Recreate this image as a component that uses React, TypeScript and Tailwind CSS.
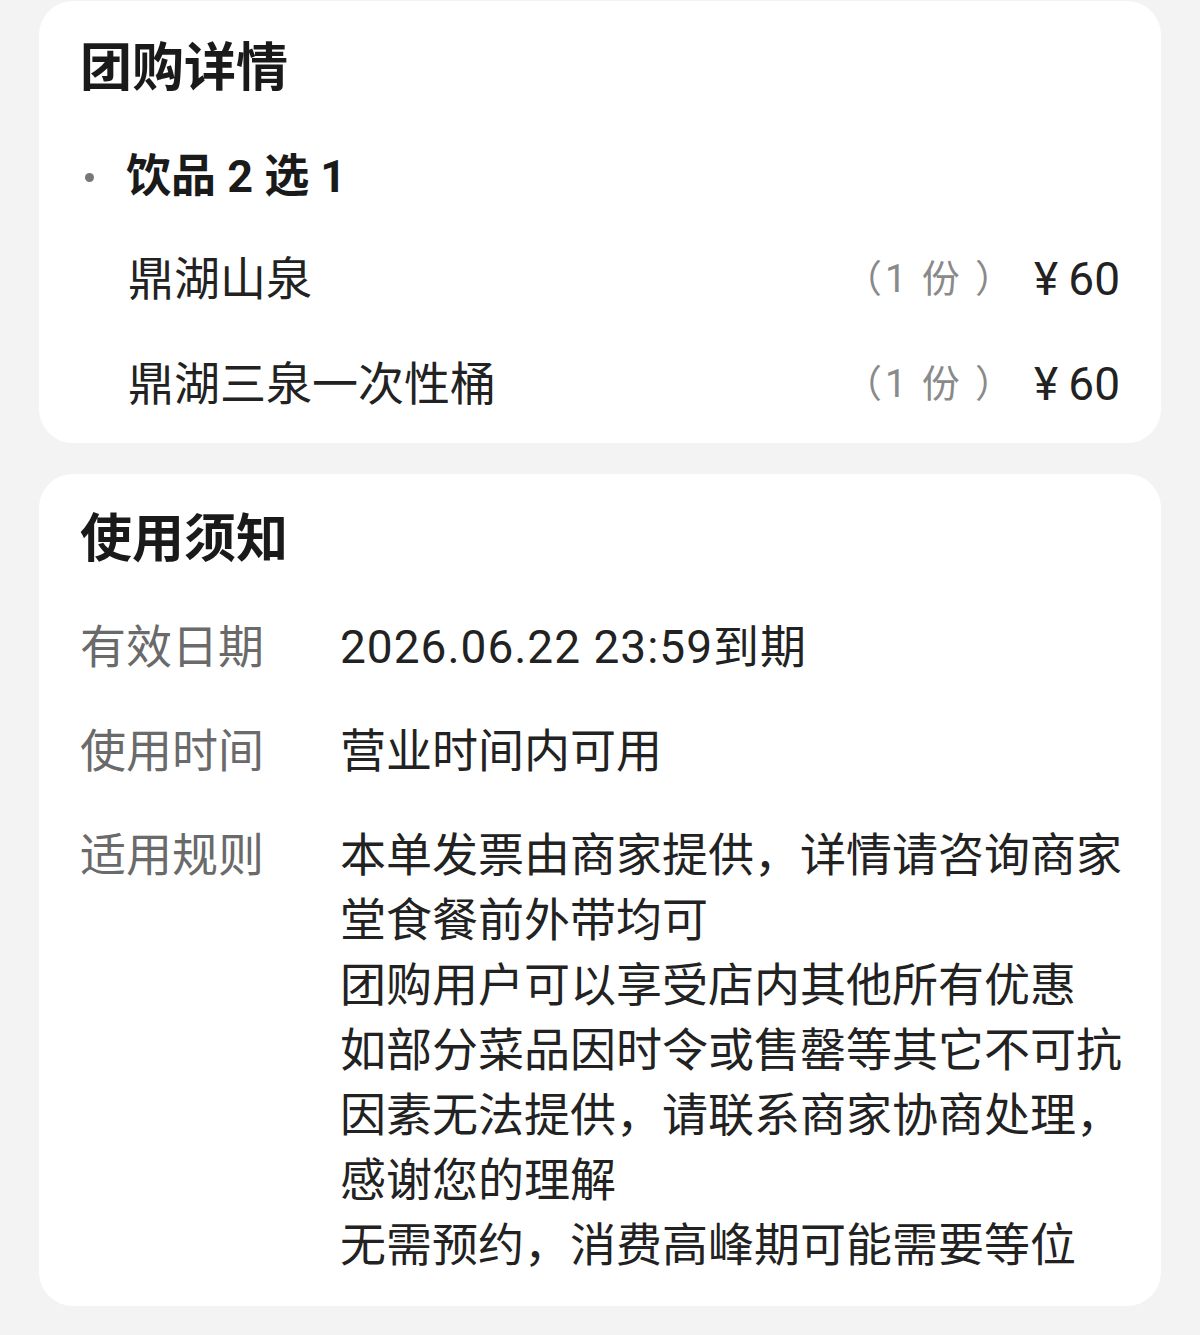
import React from 'react';

const font = "font-['Roboto','Noto_Sans_CJK_SC',sans-serif]";

const items = [
  { name: '鼎湖山泉', qty: 1, price: 60 },
  { name: '鼎湖三泉一次性桶', qty: 1, price: 60 },
];

const rules = [
  '本单发票由商家提供，详情请咨询商家',
  '堂食餐前外带均可',
  '团购用户可以享受店内其他所有优惠',
  '如部分菜品因时令或售罄等其它不可抗',
  '因素无法提供，请联系商家协商处理，',
  '感谢您的理解',
  '无需预约，消费高峰期可能需要等位',
];

function Row({ label, lines, wide }: { label: string; lines: string[]; wide?: boolean }) {
  return (
    <div className="flex">
      <div className="w-[260px] shrink-0 text-[46px] leading-[65px] text-[#6a6a6a]">{label}</div>
      <div className={`flex flex-col text-[46px] leading-[65px] text-[#222] ${wide ? 'tracking-[1px]' : ''}`}>
        {lines.map((l) => (
          <div key={l} className="whitespace-nowrap">{l}</div>
        ))}
      </div>
    </div>
  );
}

export default function App() {
  return (
    <div className={`${font} h-[1335px] overflow-hidden bg-[#f3f3f3] px-[39px] pt-px`}>
      <div className="rounded-[34px] bg-white px-[41px] pt-[37px] pb-[6px]">
        <h2 className="h-[62px] text-[52px] font-bold leading-[62px] text-[#1a1a1a]">团购详情</h2>
        <div className="mt-[47px] flex h-[60px] items-center">
          <span className="ml-[5px] h-[9px] w-[9px] rounded-full bg-[#777]" />
          <span className="ml-[32px] text-[45px] font-bold leading-[60px] text-[#1a1a1a]">饮品 2 选 1</span>
        </div>
        <div className="mt-[20px]">
          {items.map((it) => (
            <div key={it.name} className="flex h-[105px] items-center pl-[48px]">
              <span className="flex-1 text-[46px] text-[#222]">{it.name}</span>
              <span className="text-[38px] tracking-[3px] text-[#8a8a8a]">（{it.qty} 份 ）</span>
              <span className="ml-[18px] text-[46px] text-[#222]">
                ¥<span className="ml-[10px]">{it.price}</span>
              </span>
            </div>
          ))}
        </div>
      </div>

      <div className="mt-[31px] rounded-[34px] bg-white px-[41px] pt-[35px] pb-[28px]">
        <h2 className="h-[62px] text-[52px] font-bold leading-[62px] text-[#1a1a1a]">使用须知</h2>
        <div className="mt-[44px] flex flex-col gap-[39px]">
          <Row label="有效日期" lines={['2026.06.22 23:59到期']} wide />
          <Row label="使用时间" lines={['营业时间内可用']} />
          <Row label="适用规则" lines={rules} />
        </div>
      </div>

      <div className="mt-[29px] h-[40px] rounded-[34px] bg-white" />
    </div>
  );
}
